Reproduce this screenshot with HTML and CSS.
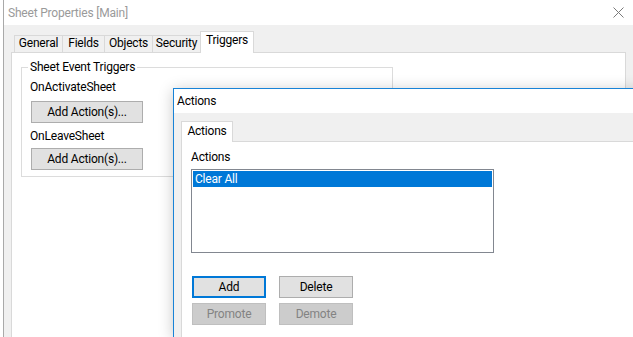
FILE: index.html
```html
<!DOCTYPE html>
<html>
<head>
<meta charset="utf-8">
<title>Sheet Properties</title>
<link rel="stylesheet" href="styles.css">
</head>
<body>
<div class="window">
  <div class="titlebar">
    <span class="title">Sheet Properties [Main]</span>
    <svg class="close" width="11" height="11" viewBox="0 0 11 11"><path d="M0.5 0.5 L10.5 10.5 M10.5 0.5 L0.5 10.5" stroke="#7a7a7a" stroke-width="1" fill="none"/></svg>
  </div>
  <div class="client">
    <div class="tabctl">
      <div class="tabs">
        <div class="tab w-general">General</div>
        <div class="tab w-fields">Fields</div>
        <div class="tab w-objects">Objects</div>
        <div class="tab w-security">Security</div>
        <div class="tab tab-sel w-triggers">Triggers</div>
      </div>
      <div class="panel">
        <fieldset class="group">
          <legend class="legend">Sheet Event Triggers</legend>
          <div class="lbl lbl1">OnActivateSheet</div>
          <button class="btn btn-wide b1">Add Action(s)...</button>
          <div class="lbl lbl2">OnLeaveSheet</div>
          <button class="btn btn-wide b2">Add Action(s)...</button>
        </fieldset>
      </div>
    </div>
  </div>
</div>

<div class="dialog">
  <div class="dtitle">Actions</div>
  <div class="dbody">
    <div class="itabs">
      <div class="itab">Actions</div>
    </div>
    <div class="ipanel">
      <div class="ilbl">Actions</div>
      <div class="listbox">
        <div class="item-sel">Clear All</div>
      </div>
      <div class="btnrow row1">
        <button class="btn btn-sm btn-focus">Add</button>
        <button class="btn btn-sm">Delete</button>
      </div>
      <div class="btnrow row2">
        <button class="btn btn-sm btn-dis">Promote</button>
        <button class="btn btn-sm btn-dis">Demote</button>
      </div>
    </div>
  </div>
</div>
</body>
</html>
```

FILE: styles.css
```css
* { box-sizing: border-box; }
html, body {
  margin: 0;
  padding: 0;
  overflow: hidden;
}
body {
  width: 633px;
  height: 337px;
  position: relative;
  background: #ffffff;
  font-family: "Segoe UI", Roboto, "Liberation Sans", sans-serif;
  font-size: 12px;
  letter-spacing: -0.2px;
  line-height: 16px;
  color: #000;
}
.window {
  margin-left: 3px;
  border-left: 1px solid #a9a9a9;
  height: 337px;
  display: flex;
  flex-direction: column;
  overflow: hidden;
}
.titlebar {
  height: 25px;
  flex: none;
  background: #fff;
  display: flex;
  align-items: center;
  justify-content: space-between;
  padding: 0 9px 0 4px;
}
.title { color: #9a9a9a; }
.close { display: block; }
.client {
  flex: 1;
  min-height: 0;
  background: #f0f0f0;
  padding: 6px 0 0 7px;
  display: flex;
  flex-direction: column;
}
.tabctl {
  width: 615px;
  flex: 1;
  display: flex;
  flex-direction: column;
}
.tabs {
  display: flex;
  align-items: flex-end;
  height: 21px;
  flex: none;
  padding-left: 3px;
}
.tab {
  height: 17px;
  border: 1px solid #d9d9d9;
  border-bottom: none;
  background: #f0f0f0;
  text-align: center;
  line-height: 15px;
  margin-left: -1px;
}
.tab:first-child { margin-left: 0; }
.w-general { width: 49px; }
.w-fields { width: 43px; }
.w-objects { width: 49px; }
.w-security { width: 49px; }
.w-triggers { width: 54px; }
.tab-sel {
  height: 22px;
  margin-bottom: -1px;
  background: #fff;
  position: relative;
  z-index: 1;
  line-height: 17px;
}
.panel {
  flex: 1;
  border: 1px solid #d9d9d9;
  border-bottom: none;
  background: #fff;
  padding: 6px 0 0 9px;
}
.group {
  margin: 0;
  width: 372px;
  border: 1px solid #dcdcdc;
  padding: 0 9px 6px 8px;
}
.legend {
  padding: 0 2px;
  margin-left: -2px;
  line-height: 16px;
}
.lbl { line-height: 16px; }
.lbl1 { margin-top: 4px; }
.lbl2 { margin-top: 5px; }
.btn {
  display: block;
  font: inherit;
  letter-spacing: inherit;
  line-height: 16px;
  height: 22px;
  padding: 0;
  margin: 0;
  background: #e1e1e1;
  border: 1px solid #adadad;
  color: #000;
  text-align: center;
}
.btn-wide { width: 112px; margin-left: 1px; }
.b1 { margin-top: 6px; }
.b2 { margin-top: 4px; }

.dialog {
  position: absolute;
  left: 173px;
  top: 88px;
  width: 470px;
  height: 249px;
  border: 1px solid #1883d7;
  border-bottom: none;
  border-right: none;
  background: #f0f0f0;
  box-shadow: 0 2px 14px rgba(0, 0, 0, 0.22);
  display: flex;
  flex-direction: column;
}
.dtitle {
  height: 24px;
  flex: none;
  background: #fff;
  padding-left: 3px;
  line-height: 24px;
}
.dbody {
  flex: 1;
  padding: 8px 0 0 7px;
  display: flex;
  flex-direction: column;
}
.itabs {
  display: flex;
  align-items: flex-end;
  height: 20px;
  flex: none;
}
.itab {
  width: 52px;
  height: 21px;
  margin-bottom: -1px;
  border: 1px solid #d9d9d9;
  border-bottom: none;
  background: #fff;
  text-align: center;
  line-height: 19px;
  position: relative;
  z-index: 1;
}
.ipanel {
  flex: 1;
  border: 1px solid #d9d9d9;
  border-right: none;
  border-bottom: none;
  background: #fff;
  padding: 7px 0 0 9px;
}
.ilbl { line-height: 16px; }
.listbox {
  margin-top: 4px;
  width: 303px;
  height: 84px;
  border: 1px solid #828790;
  padding: 1px;
  background: #fff;
}
.item-sel {
  height: 16px;
  line-height: 16px;
  background: #0078d7;
  color: #fff;
  padding-left: 2px;
}
.btnrow {
  display: flex;
  gap: 13px;
  margin-left: 1px;
}
.row1 { margin-top: 23px; }
.row2 { margin-top: 5px; }
.btn-sm { width: 74px; }
.btn-focus { border: 2px solid #0078d7; }
.btn-dis {
  background: #cccccc;
  border-color: #bfbfbf;
  color: #838383;
}
```
